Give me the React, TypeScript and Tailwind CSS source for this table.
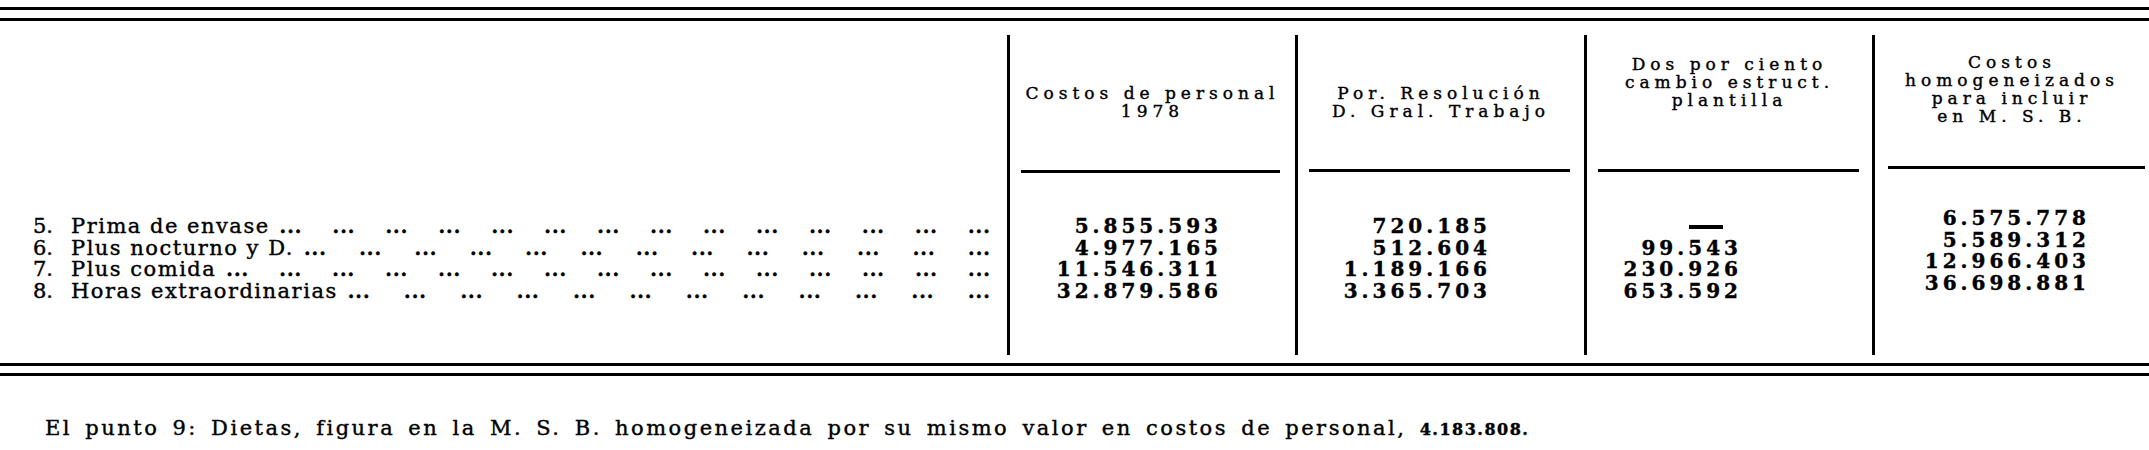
import React from 'react';

interface Column {
  header: string[];
  headerPad: string;
  headerHeight: string;
  underline: string;
  width: string;
  valuesPad: string;
  values: (string | null)[];
}

const columns: Column[] = [
  {
    header: ['Costos de personal', '1978'],
    headerPad: 'pt-[49px]',
    headerHeight: 'h-[135px]',
    underline: 'ml-[11px] mr-[15px]',
    width: 'w-[288px]',
    valuesPad: 'pt-[43px] pr-[73px]',
    values: ['5.855.593', '4.977.165', '11.546.311', '32.879.586'],
  },
  {
    header: ['Por. Resolución', 'D. Gral. Trabajo'],
    headerPad: 'pt-[49px]',
    headerHeight: 'h-[134px]',
    underline: 'ml-[11px] mr-[14px]',
    width: 'w-[289px]',
    valuesPad: 'pt-[44px] pr-[93px]',
    values: ['720.185', '512.604', '1.189.166', '3.365.703'],
  },
  {
    header: ['Dos por ciento', 'cambio estruct.', 'plantilla'],
    headerPad: 'pt-[20px]',
    headerHeight: 'h-[134px]',
    underline: 'ml-[11px] mr-[13px]',
    width: 'w-[288px]',
    valuesPad: 'pt-[44px] pr-[130px]',
    values: [null, '99.543', '230.926', '653.592'],
  },
  {
    header: ['Costos', 'homogeneizados', 'para incluir', 'en M. S. B.'],
    headerPad: 'pt-[18px]',
    headerHeight: 'h-[131px]',
    underline: 'ml-[13px] mr-[4px]',
    width: 'flex-1',
    valuesPad: 'pt-[39px] pr-[59px]',
    values: ['6.575.778', '5.589.312', '12.966.403', '36.698.881'],
  },
];

const rows = [
  { n: '5.', label: 'Prima de envase', dots: 14 },
  { n: '6.', label: 'Plus nocturno y D.', dots: 13 },
  { n: '7.', label: 'Plus comida', dots: 15 },
  { n: '8.', label: 'Horas extraordinarias', dots: 12 },
];

function Rule() {
  return <div className="h-[3px] w-full bg-black" />;
}

// dot leaders, spread from the end of the label to the column line
function Leaders({ count }: { count: number }) {
  return (
    <div className="ml-[10px] flex min-w-0 flex-1 justify-between overflow-hidden font-bold">
      {Array.from({ length: count }).map((_, i) => (
        <span key={i} className="shrink-0 text-[19px] tracking-[1px]">
          ...
        </span>
      ))}
    </div>
  );
}

function DataColumn({ col }: { col: Column }) {
  return (
    <div className={`${col.width} flex shrink-0 flex-col border-l-[3px] border-black`}>
      <div className={`${col.headerHeight} ${col.headerPad} text-center text-[17px] leading-[18px] tracking-[5px]`}>
        {col.header.map((line) => (
          <div key={line}>{line}</div>
        ))}
      </div>
      <div className={`h-[3px] bg-black ${col.underline}`} />
      <div className={`${col.valuesPad} flex flex-col items-end text-[20px] font-bold leading-[21.5px] tracking-[4px]`}>
        {col.values.map((v, i) =>
          v === null ? (
            <div key={i} className="flex h-[21.5px] items-center pr-[19px]">
              <div className="h-[4px] w-[34px] bg-black" />
            </div>
          ) : (
            <div key={i}>{v}</div>
          )
        )}
      </div>
    </div>
  );
}

export default function App() {
  return (
    <div className="h-[450px] w-[2149px] overflow-hidden bg-white font-['DejaVu_Serif',serif] text-black [-webkit-text-stroke:0.4px_black]">
      <div className="pt-[7px]">
        <Rule />
        <div className="mt-[8px]">
          <Rule />
        </div>
      </div>

      <div className="mt-[14px] flex h-[320px]">
        <div className="w-[1007px] shrink-0 pl-[33px] pr-[16px] pt-[181px] text-[21px] leading-[21.5px]">
          {rows.map((r) => (
            <div key={r.n} className="flex whitespace-nowrap">
              <span className="w-[38px] shrink-0">{r.n}</span>
              <span className="shrink-0 tracking-[1.5px]">{r.label}</span>
              <Leaders count={r.dots} />
            </div>
          ))}
        </div>
        {columns.map((col) => (
          <DataColumn key={col.header[0] + col.width} col={col} />
        ))}
      </div>

      <div className="mt-[8px]">
        <Rule />
      </div>
      <div className="mt-[7px]">
        <Rule />
      </div>

      <p className="mt-[39px] pl-[45px] text-[21px] leading-[26px] tracking-[2.5px] [word-spacing:4px]">
        El punto 9: Dietas, figura en la M. S. B. homogeneizada por su mismo valor en costos de personal,{' '}
        <span className="text-[16px] font-bold tracking-[1.5px]">4.183.808.</span>
      </p>
    </div>
  );
}
